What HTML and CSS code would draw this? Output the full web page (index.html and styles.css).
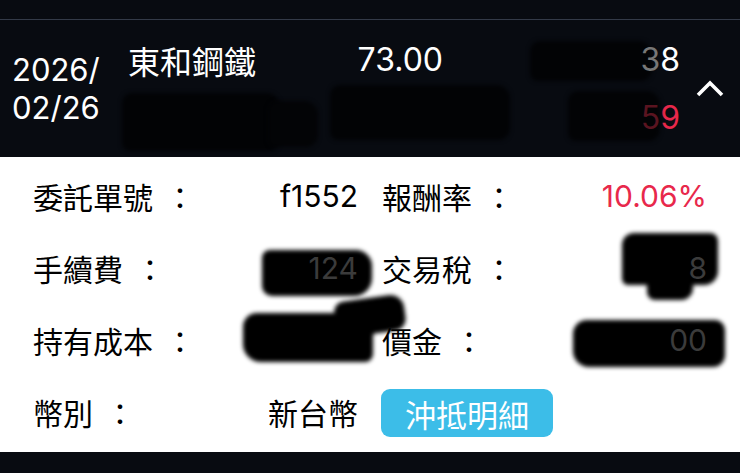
FILE: index.html
```html
<!DOCTYPE html>
<html lang="zh-Hant">
<head>
  <meta charset="utf-8" />
  <title>委託明細</title>
  <link rel="stylesheet" href="styles.css">
</head>
<body>
  <div class="topbar"></div>

  <div class="summary">
    <div class="date">2026/<br>02/26</div>
    <div class="cells">
      <div class="cell name">東和鋼鐵</div>
      <div class="cell num">73.00</div>
      <div class="cell num"><i class="blot b-amt"></i><span class="fade">3</span>8</div>
      <div class="cell name"><i class="blot b-qty"></i><i class="blot b-qty2"></i></div>
      <div class="cell num"><i class="blot b-cost"></i></div>
      <div class="cell num loss"><i class="blot b-pl"></i><span class="fade-red">5</span>9</div>
    </div>
    <div class="toggle">
      <svg width="28" height="18" viewBox="0 0 28 18"><polyline points="2,16 14,4 26,16" fill="none" stroke="#fff" stroke-width="3.6" /></svg>
    </div>
  </div>

  <div class="detail">
    <div class="field"><span class="label">委託單號<i>：</i></span><span class="value">f1552</span></div>
    <div class="field"><span class="label">報酬率<i>：</i></span><span class="value loss">10.06%</span></div>

    <div class="field"><span class="label">手續費<i>：</i></span><i class="blot b-fee"></i><span class="value smudge">124</span></div>
    <div class="field"><span class="label">交易稅<i>：</i></span><i class="blot b-tax"></i><i class="blot b-tax2"></i><span class="value smudge">8</span></div>

    <div class="field"><span class="label">持有成本<i>：</i></span><i class="blot b-hold"></i><i class="blot b-hold2"></i><span class="value"></span></div>
    <div class="field"><span class="label">價金<i>：</i></span><i class="blot b-price"></i><span class="value smudge">00</span></div>

    <div class="field"><span class="label">幣別<i>：</i></span><span class="value">新台幣</span></div>
    <div class="field"><span class="button">沖抵明細</span></div>
  </div>

  <div class="bottombar"></div>
</body>
</html>
```

FILE: styles.css
```css
html, body { margin: 0; padding: 0; }
body { background: #080b11; font-family: "Inter", "Noto Sans CJK TC", sans-serif; color: #fff; width: 740px; height: 473px; overflow: hidden; }
i { font-style: normal; }

.topbar { height: 19px; border-bottom: 1px solid #333a48; }

.summary { display: flex; align-items: center; height: 137px; }
.date { width: 116px; padding-left: 12px; font-size: 31px; line-height: 38px; }
.cells { display: grid; grid-template-columns: 170px 145px 237px; grid-template-rows: 58px 58px; font-size: 32px; }
.cell { position: relative; display: flex; align-items: center; }
.cell.num { justify-content: flex-end; }
.cell.loss { color: #e8284b; }
.fade { color: #777; position: relative; }
.fade-red { color: #5a1420; position: relative; }
.toggle { flex: 1; display: flex; justify-content: center; padding-bottom: 2px; }

.detail { background: #fff; color: #000; height: 295px; box-sizing: border-box; padding: 3px 33px 4px; display: grid; grid-template-columns: 325px 325px; grid-auto-rows: 72px; column-gap: 24px; font-size: 30px; }
.field { position: relative; display: flex; align-items: center; justify-content: space-between; }
.label i { margin-left: 12px; }
.value { position: relative; }
.value.loss { color: #e8284b; }
.value.smudge { color: #3b3b3b; }
.button { background: #3cbde8; color: #fff; border-radius: 9px; height: 48px; width: 172px; display: flex; align-items: center; justify-content: center; font-size: 31px; margin-left: -1px; margin-top: 2px; }

.bottombar { height: 21px; }

/* redaction marks */
.blot { position: absolute; background: #000; border-radius: 10px 14px 12px 8px; filter: blur(2px); }
.b-amt { left: 87px; top: 10px; width: 122px; height: 40px; background: #020305; }
.b-qty { left: -6px; top: 4px; width: 158px; height: 58px; background: #020305; }
.b-qty2 { left: 140px; top: 12px; width: 50px; height: 46px; background: #030406; }
.b-cost { left: 32px; top: -4px; width: 180px; height: 55px; background: #020305; }
.b-pl { left: 125px; top: 2px; width: 92px; height: 50px; background: #020305; }
.b-fee { left: 229px; top: 18px; width: 110px; height: 46px; border-radius: 8px 16px 18px 10px; }
.b-tax { left: 240px; top: 1px; width: 96px; height: 52px; border-radius: 12px 8px 14px 6px; }
.b-tax2 { left: 265px; top: 26px; width: 46px; height: 42px; }
.b-hold { left: 210px; top: 9px; width: 130px; height: 49px; border-radius: 14px 6px 8px 18px; }
.b-hold2 { left: 302px; top: -6px; width: 70px; height: 36px; transform: rotate(-8deg); }
.b-price { left: 191px; top: 16px; width: 152px; height: 47px; border-radius: 14px 10px 12px 16px; }
```
